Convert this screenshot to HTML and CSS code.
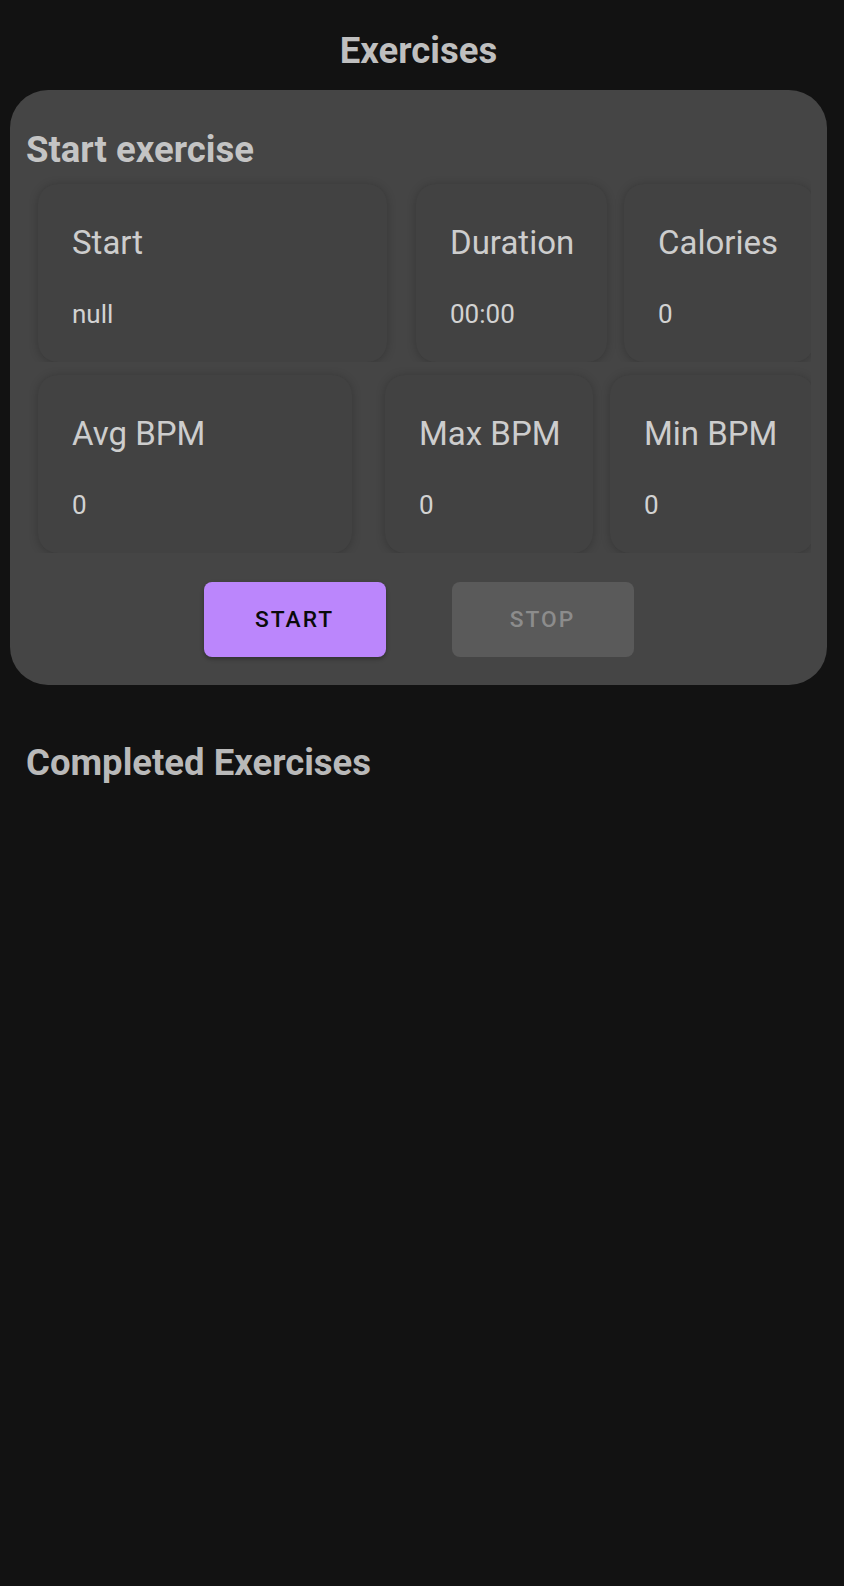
FILE: index.html
```html
<!DOCTYPE html>
<html lang="en">
<head>
<meta charset="utf-8">
<title>Exercises</title>
<link rel="stylesheet" href="styles.css">
</head>
<body>
<main class="screen">
  <h1 class="title">Exercises</h1>
  <section class="panel">
    <h2 class="heading">Start exercise</h2>
    <div class="row">
      <div class="stat stat-start"><div class="stat-label">Start</div><div class="stat-value">null</div></div>
      <div class="stat stat-duration"><div class="stat-label">Duration</div><div class="stat-value">00:00</div></div>
      <div class="stat stat-calories"><div class="stat-label">Calories</div><div class="stat-value">0</div></div>
    </div>
    <div class="row">
      <div class="stat stat-avg"><div class="stat-label">Avg BPM</div><div class="stat-value">0</div></div>
      <div class="stat stat-max"><div class="stat-label">Max BPM</div><div class="stat-value">0</div></div>
      <div class="stat stat-min"><div class="stat-label">Min BPM</div><div class="stat-value">0</div></div>
    </div>
    <div class="actions">
      <button class="btn btn-primary" type="button">START</button>
      <button class="btn btn-disabled" type="button" disabled>STOP</button>
    </div>
  </section>
  <h2 class="heading heading-completed">Completed Exercises</h2>
</main>
</body>
</html>
```
FILE: styles.css
```css
html, body {
  margin: 0;
  padding: 0;
  background: #121212;
}
body {
  width: 844px;
  height: 1586px;
  font-family: Roboto, "Noto Sans", "Liberation Sans", sans-serif;
  color: #c2c2c2;
}
.screen {
  padding: 0 17px 0 10px;
}
.title {
  margin: 0;
  padding-top: 29px;
  font-size: 36.5px;
  line-height: 44px;
  font-weight: 700;
  text-align: center;
  color: #bfbfbf;
}
.panel {
  margin-top: 17px;
  background: #454545;
  border-radius: 38px;
  padding: 38px 16px 28px 16px;
}
.heading {
  margin: 0;
  font-size: 36.5px;
  line-height: 44px;
  font-weight: 700;
  color: #c4c4c4;
}
.row {
  display: flex;
  overflow: hidden;
  padding: 12px 0 0 12px;
  margin-bottom: 1px;
}
.stat {
  flex: 0 0 auto;
  box-sizing: border-box;
  background: #424242;
  border-radius: 20px;
  padding: 39px 34px 32px 34px;
  box-shadow: 0 1px 10px rgba(0, 0, 0, 0.22);
}
.stat-label {
  font-size: 33px;
  line-height: 40px;
  color: #cdcdcd;
  white-space: nowrap;
}
.stat-value {
  margin-top: 35px;
  font-size: 26px;
  line-height: 32px;
  color: #d2d2d2;
  white-space: nowrap;
}
.stat-start { width: 349px; margin-right: 29px; }
.stat-duration { width: 191px; margin-right: 17px; }
.stat-calories { width: 190px; }
.stat-avg { width: 314px; margin-right: 33px; }
.stat-max { width: 208px; margin-right: 17px; }
.stat-min { width: 204px; }
.actions {
  display: flex;
  justify-content: center;
  gap: 66px;
  margin-top: 29px;
}
.btn {
  width: 182px;
  height: 75px;
  border: 0;
  border-radius: 8px;
  font-family: Roboto, "Noto Sans", "Liberation Sans", sans-serif;
  font-size: 22.75px;
  font-weight: 500;
  letter-spacing: 0.089em;
  padding: 0;
}
.btn-primary {
  background: #bb86fc;
  color: #0a0a0a;
  box-shadow: 0 2px 4px rgba(0, 0, 0, 0.3);
}
.btn-disabled {
  background: #5a5a5a;
  color: #8c8c8c;
}
.heading-completed {
  margin-top: 56px;
  padding-left: 16px;
  color: #b9b9b9;
}
```
